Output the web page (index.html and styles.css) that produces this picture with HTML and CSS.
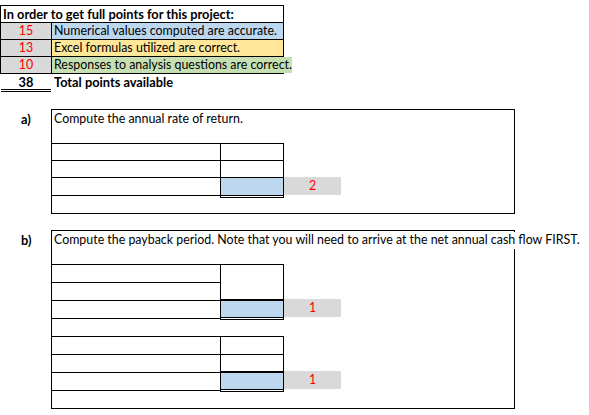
FILE: index.html
```html
<!DOCTYPE html>
<html>
<head>
<meta charset="utf-8">
<link rel="stylesheet" href="styles.css">
</head>
<body>
<div class="sheet">
  <div class="summary">
    <div class="srow"><span class="title">In order to get full points for this project:</span></div>
    <div class="srow"><span class="num">15</span><span class="desc blue">Numerical values computed are accurate.</span></div>
    <div class="srow"><span class="num">13</span><span class="desc yellow">Excel formulas utilized are correct.</span></div>
    <div class="srow"><span class="num">10</span><span class="desc green">Responses to analysis questions are correct.</span></div>
  </div>
  <div class="total"><span class="tnum">38</span><span class="tlabel">Total points available</span></div>

  <section class="part part-a">
    <div class="label">a)</div>
    <div class="box box-a">
      <div class="q"><span class="qt">Compute the annual rate of return.</span></div>
      <div class="wr h17"><div class="l"></div><div class="r top"></div></div>
      <div class="wr h17"><div class="l"></div><div class="r top"></div></div>
      <div class="wr h18"><div class="l lb"></div><div class="r top ans"></div><div class="p">2</div></div>
    </div>
  </section>

  <section class="part part-b">
    <div class="label">b)</div>
    <div class="box box-b">
      <div class="q"><span class="qt">Compute the payback period. Note that you will need to arrive at the net annual cash flow FIRST.</span></div>
      <div class="wr h18"><div class="l"></div><div class="r top"></div></div>
      <div class="wr h18"><div class="l"></div><div class="r"></div></div>
      <div class="wr h18"><div class="l lb"></div><div class="r thick ans"></div><div class="p up">1</div></div>
      <div class="wr h18"></div>
      <div class="wr h18"><div class="l"></div><div class="r top"></div></div>
      <div class="wr h18"><div class="l"></div><div class="r top"></div></div>
      <div class="wr h18"><div class="l lb"></div><div class="r thick ans"></div><div class="p up">1</div></div>
    </div>
  </section>
</div>
</body>
</html>
```

FILE: styles.css
```css
* { box-sizing: border-box; }
body {
  margin: 0;
  background: #fff;
  color: #000;
  font-family: Lato, "Liberation Sans", sans-serif;
  font-size: 12.4px;
  line-height: 16px;
}
.summary {
  margin-top: 5px;
  width: 284px;
  border-left: 1px solid #000;
  border-right: 1px solid #000;
  border-bottom: 1px solid #000;
}
.srow {
  display: flex;
  height: 17px;
  border-top: 1px solid #000;
  white-space: nowrap;
}
.title {
  font-weight: bold;
  font-size: 12.8px;
  padding-left: 2px;
}
.num {
  width: 51px;
  flex: none;
  border-right: 1px solid #000;
  background: #d9d9d9;
  color: #ff0000;
  text-align: center;
}
.desc {
  flex: 1;
  padding-left: 2px;
}
.blue { background: #bdd7ee; }
.yellow { background: #ffe699; }
.green { background: #c6e0b4; }

.total {
  display: flex;
  height: 18px;
  font-weight: bold;
  font-size: 12.8px;
  white-space: nowrap;
}
.tnum {
  width: 50px;
  margin-left: 1px;
  height: 18px;
  text-align: center;
  border-bottom: 3px double #000;
}
.tlabel { padding-left: 3px; }

.part {
  display: flex;
  align-items: flex-start;
}
.part-a { margin-top: 17px; }
.part-b { margin-top: 16px; }
.label {
  width: 51px;
  flex: none;
  padding-left: 21px;
  padding-top: 2px;
  font-weight: bold;
  font-size: 12.8px;
}
.box {
  width: 464px;
  border: 1px solid #000;
  white-space: nowrap;
}
.box-a { height: 105px; }
.box-b { height: 179px; }
.q {
  height: 33px;
  padding-left: 2px;
  padding-top: 1px;
}
.qt {
  display: inline-block;
  background: #fff;
  height: 17px;
  padding-right: 2px;
}
.wr {
  display: flex;
  align-items: flex-start;
}
.h17 { height: 17px; }
.h18 { height: 18px; }
.l {
  width: 168px;
  height: 100%;
  border-top: 1px solid #000;
}
.l.lb {
  height: 19px;
  border-bottom: 1px solid #000;
}
.r {
  width: 64px;
  height: 100%;
  border-left: 1px solid #000;
  border-right: 1px solid #000;
}
.r.top { border-top: 1px solid #000; }
.r.ans {
  background: #bdd7ee;
  background-clip: padding-box;
  height: 21px;
  border-bottom: 3px double #000;
}
.r.thick {
  margin-top: -1px;
  border-top: 2px solid #000;
}
.p {
  width: 57px;
  height: 18px;
  background: #d9d9d9;
  color: #ff0000;
  text-align: center;
  line-height: 18px;
}
.p.up { margin-top: -1px; }
```
